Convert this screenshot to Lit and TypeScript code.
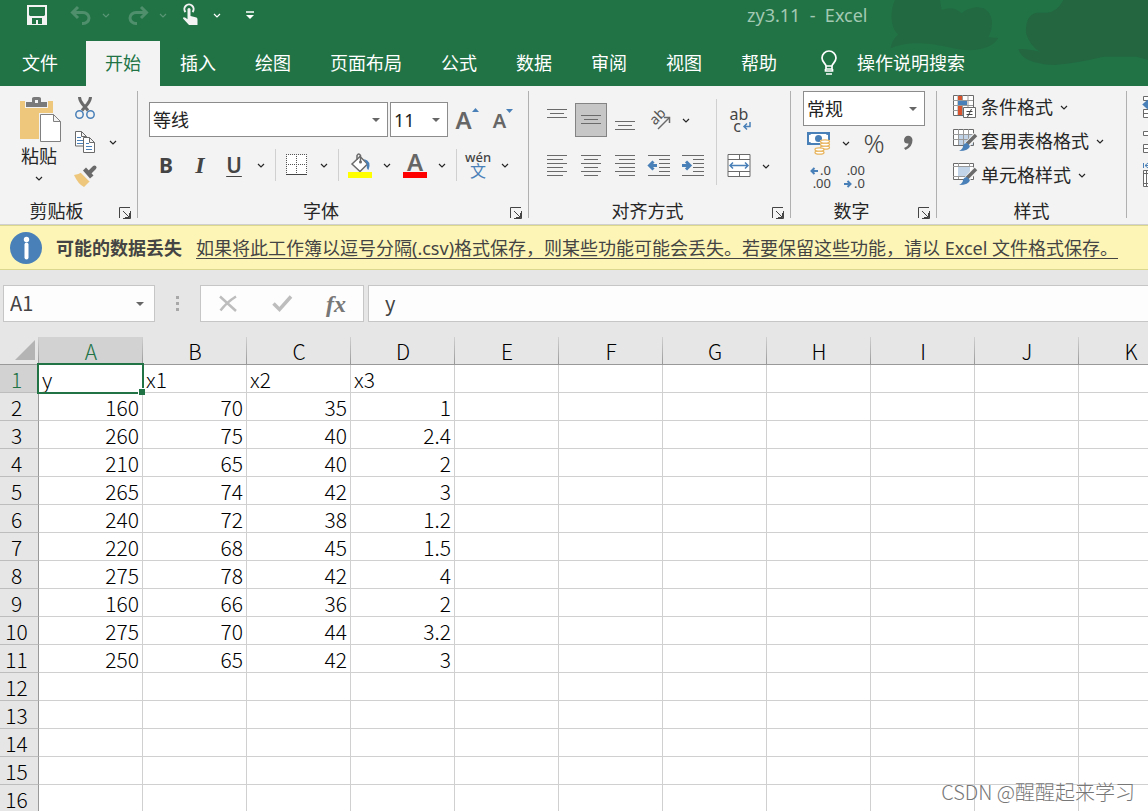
import { LitElement, html, svg, css } from "lit";
import { customElement } from "lit/decorators.js";
import { classMap } from "lit/directives/class-map.js";

const GREY = "#6a6a6a";
const BLUE = "#4a80b8";

const icon = (w: number, h: number, body: unknown) => html`
  <svg width=${w} height=${h} viewBox="0 0 ${w} ${h}" fill="none" aria-hidden="true">${body}</svg>`;

/** Horizontal rules: each entry is [x1, x2, y]. */
const rules = (list: number[][]) =>
  svg`<path stroke=${GREY} stroke-width="1" shape-rendering="crispEdges" d=${list.map(([a, b, y]) => `M${a} ${y}.5H${b}`).join("")} />`;

const ICONS = {
  caret: icon(8, 5, svg`<path d="M1 1l3 3 3-3" stroke="currentColor" stroke-width="1.2"/>`),
  arrow: icon(8, 4, svg`<path d="M0 0h8L4 4z" fill="#666"/>`),
  save: icon(20, 20, svg`<path d="M0 0h20v20H0z" fill="#f3f3f3"/><path d="M2 2h16v8l-1 1H3l-1-1zM5 13h10v6H5z" fill="#217346"/><path d="M8 15h3v4H8z" fill="#f3f3f3"/><path d="M7 15h2v4H7z" fill="#217346"/>`),
  undo: icon(22, 20, svg`<path d="M8 2L2.500 7.500 8 13M2.500 7.500H13a6 5.500 0 0 1 0 11h-1" stroke="#4f8f6c" stroke-width="3"/>`),
  redo: icon(22, 20, svg`<path d="M14 2l5.500 5.500L14 13M19.500 7.500H9a6 5.500 0 0 0 0 11h1" stroke="#4f8f6c" stroke-width="3"/>`),
  touch: icon(18, 22, svg`<path d="M4.500 8a4.600 4.600 0 1 1 7 0" stroke="#f3f3f3" stroke-width="2"/><path d="M6.500 5q1.500-2 3 0v7l6 1.500q1 .5 1 2V21H8L2 14.500q0-2 2.500-.8l2 1.500z" fill="#f3f3f3"/>`),
  more: icon(8, 8, svg`<path d="M0 1h8" stroke="#fff" stroke-width="1.500"/><path d="M0 4h8L4 8z" fill="#fff"/>`),
  bulb: icon(18, 26, svg`<path d="M6 19v-3c0-2-4-4-4-8a7 7 0 0 1 14 0c0 4-4 6-4 8v3zM5.500 19v2h7v-2M6 16h6" stroke="#fff" stroke-width="1.700"/><path d="M6 24h6" stroke="#fff" stroke-width="1.500"/>`),
  paste: icon(46, 46, svg`<g transform="translate(4 0)"><path d="M0 5h33v38H0z" fill="#eec67c"/><path d="M5 4h23v8H5z" fill="#f3f3f3"/><path d="M6 6h6V2.500Q12 1 14 1h5q2 0 2 1.500V6h6v5H6zM15 4v3h3V4z" fill="#7a7a7a" fill-rule="evenodd"/><path d="M19 17h16l7 7v22H19z" fill="#f3f3f3"/><path d="M20.500 18.500h13l7 7v20h-20zM33.500 18.500v7h7" fill="#fff" stroke="#808080"/></g>`),
  cut: icon(22, 24, svg`<path d="M5.500 1q0 3 3 7l5.500 6.500M16.500 1q0 3-3 7L8 14.500" stroke=${GREY} stroke-width="3"/><circle cx="5.500" cy="18.500" r="3.700" stroke=${BLUE} stroke-width="1.500"/><circle cx="16.500" cy="18.500" r="3.700" stroke=${BLUE} stroke-width="1.500"/>`),
  copy: icon(20, 22, svg`<path d="M.5.5h6l5 5v9.500H.5zM6.500.5v5h5" fill="#fff" stroke=${GREY}/><path d="M2 6.500h4M2 9.500h6M2 12.500h6" stroke=${BLUE}/><path d="M8.500 6.500h6l5 5v10h-11zM14.500 6.500v5h5" fill="#fff" stroke=${GREY}/><path d="M11 12.500h3M11 15.500h6M11 18.500h6" stroke=${BLUE}/>`),
  brush: icon(24, 22, svg`<path d="M1 10q4 0 8-3l8 9-6 6Q5 19 1 10z" fill="#eec67c"/><path d="M8 6l9.500 9.500" stroke="#f3f3f3" stroke-width="3"/><path d="M10 5.500l3-3 7.500 8-3.500 3z" fill=${GREY}/><path d="M16 8l5.500-5.500" stroke=${GREY} stroke-width="4" stroke-linecap="round"/>`),
  borders: icon(22, 22, svg`<path d="M1 1h20v20H1z" fill="#fff"/><path d="M0 .5h22M0 10.500h22M.5 0v20M10.500 0v20M20.500 0v20" stroke="#555" stroke-dasharray="1 1" shape-rendering="crispEdges"/><path d="M0 20.500h21" stroke="#444" shape-rendering="crispEdges"/>`),
  fill: icon(26, 26, svg`<path d="M5 12l8-7.500 7.500 7.500-7.500 7.500z" fill="#fff" stroke=${GREY} stroke-width="1.500"/><path d="M10 8V3.500q1.700-3 3.500 0V10" stroke=${GREY} stroke-width="1.500"/><circle cx="13.500" cy="10" r="1.500" fill=${GREY}/><path d="M17 7q8 2 4.500 11-2.500-1-1.500-6z" fill=${BLUE}/><path d="M1 20h24v6H1z" fill="#ff0"/>`),
  rotate: icon(22, 22, svg`<path d="M10 20L21 9" stroke=${GREY} stroke-width="1.500"/><path d="M16 8.500h5.500V14" stroke=${GREY} stroke-width="1.500"/><text transform="translate(10 8) rotate(-45)" y="4" text-anchor="middle" font-size="14" font-family="Noto Sans" fill="#555">ab</text>`),
  top: icon(22, 22, rules([[1, 21, 0], [4, 18, 4], [1, 21, 8]])),
  middle: icon(22, 22, rules([[1, 21, 6], [4, 18, 10], [1, 21, 14]])),
  bottom: icon(22, 22, rules([[1, 21, 12], [4, 18, 16], [1, 21, 20]])),
  left: icon(22, 22, rules([[1, 21, 0], [1, 17, 4], [1, 21, 8], [1, 17, 12], [1, 21, 16], [1, 17, 20]])),
  center: icon(22, 22, rules([[1, 21, 0], [4, 18, 4], [1, 21, 8], [4, 18, 12], [1, 21, 16], [4, 18, 20]])),
  right: icon(22, 22, rules([[1, 21, 0], [5, 21, 4], [1, 21, 8], [5, 21, 12], [1, 21, 16], [5, 21, 20]])),
  outdent: icon(22, 22, svg`${rules([[0, 22, 0], [11, 22, 4], [11, 22, 8], [11, 22, 12], [11, 22, 16], [0, 22, 20]])}<path d="M9 10.500H2M5.500 6.500l-4 4 4 4" stroke=${BLUE} stroke-width="3"/>`),
  indent: icon(22, 22, svg`${rules([[0, 22, 0], [11, 22, 4], [11, 22, 8], [11, 22, 12], [11, 22, 16], [0, 22, 20]])}<path d="M0 10.500h7M4 6.500l4 4-4 4" stroke=${BLUE} stroke-width="3"/>`),
  merge: icon(24, 24, svg`<path d="M1 .5h22v22H1z" fill="#fff" stroke=${GREY}/><path d="M1 5.500h22M1 17.500h22M12.500 0v5M12.500 18v5" stroke=${GREY}/><path d="M3 11.500h18M6 8.500l-3 3 3 3M18 8.500l3 3-3 3" stroke=${BLUE} stroke-width="1.500"/>`),
  wrapMark: icon(8, 8, svg`<path d="M7 0v4.500H1M4 1.500l-3 3 3 3" stroke=${BLUE} stroke-width="1.500"/>`),
  money: icon(24, 24, svg`<path d="M0 1h23v13H0z" fill=${BLUE}/><path d="M2 4q2 0 2-1h15q0 1 2 1v7q-2 0-2 1H4q0-1-2-1z" fill="#fff"/><circle cx="11.500" cy="7.500" r="3.500" fill=${BLUE}/><path d="M13 9h10v11h-5v4H7v-9h6z" fill="#f3f3f3"/><g fill="#fff" stroke="#e8b45c" stroke-width="1.300"><ellipse cx="18" cy="16.500" rx="4.500" ry="1.700"/><ellipse cx="18" cy="13.500" rx="4.500" ry="1.700"/><ellipse cx="18" cy="10.500" rx="4.500" ry="1.700"/><ellipse cx="12.500" cy="21.500" rx="4.500" ry="1.700"/><ellipse cx="12.500" cy="18.500" rx="4.500" ry="1.700"/></g>`),
  comma: icon(10, 16, svg`<path d="M1 5a4.200 4.200 0 1 1 8.500 0Q9.500 12 2.500 15L1 13q4.500-2 4.500-4.500Q1 9 1 5z" fill=${GREY}/>`),
  less: icon(8, 8, svg`<path d="M8 4H2M4.500 1l-3 3 3 3" stroke=${BLUE} stroke-width="2"/>`),
  greater: icon(8, 8, svg`<path d="M0 4h6M3.500 1l3 3-3 3" stroke=${BLUE} stroke-width="2"/>`),
  conditional: icon(24, 24, svg`<path d="M.5.5h20v20H.5z" fill="#fff" stroke=${GREY}/><path d="M0 5.500h20M0 10.500h20M0 15.500h20M5 0v20M9.500 0v20M15 0v20" stroke="#999"/><path d="M5 1h4v4H5zM5 11h4v9H5z" fill="#d9532c"/><path d="M5 6h9v4H5z" fill=${BLUE}/><path d="M10.500 12.500h12v10h-12z" fill="#fff" stroke=${GREY}/><path d="M13.500 16.500h6M13.500 19.500h6M18.500 14l-4 8" stroke="#444"/>`),
  tableStyle: icon(24, 24, svg`<path d="M.5.5h20v16H.5z" fill="#fff" stroke=${GREY}/><path d="M5 5h15v11H5z" fill="#c2d5e8"/><path d="M0 5.500h20M0 10.500h20M5.500 0v16M10.500 0v16M15.500 0v16" stroke="#999"/><path d="M14 16l9-10" stroke="#f3f3f3" stroke-width="6"/><path d="M14 15l9-9" stroke=${GREY} stroke-width="3.500"/><path d="M14 14l3 3q-1 5-11 5 4-2 4-5 1-3 4-3z" fill=${BLUE}/>`),
  cellStyle: icon(24, 24, svg`<path d="M.5.5h20v16H.5z" fill="#fff" stroke=${GREY}/><path d="M5.500 0v16M0 3.500h20M0 13.500h20M16.500 0v16" stroke="#999"/><path d="M5 4h12v9H5z" fill="#c2d5e8"/><path d="M14 16l9-10" stroke="#f3f3f3" stroke-width="6"/><path d="M14 15l9-9" stroke=${GREY} stroke-width="3.500"/><path d="M14 14l3 3q-1 5-11 5 4-2 4-5 1-3 4-3z" fill=${BLUE}/>`),
  insertCells: icon(22, 24, svg`<path d="M.5 1.500h20v4H.5zM.5 14.500h20v8H.5zM0 18.500h20" fill="#fff" stroke=${GREY}/><path d="M9 9.500H2M5.500 6l-4 3.500 4 3.500" stroke=${BLUE} stroke-width="3"/>`),
  deleteCells: icon(22, 24, svg`<path d="M.5 2.500h20v4H.5zM.5 15.500h20v8H.5zM0 19.500h20" fill="#fff" stroke=${GREY}/>`),
  formatCells: icon(22, 24, svg`<path d="M.5 0v5M20.500 0v5M2 2.500h16M5 0L2 2.500 5 5" stroke=${BLUE}/><path d="M.5 7.500h20v16H.5zM0 10.500h20M0 20.500h20M3.500 7v16" fill="#fff" stroke=${GREY}/>`),
  launcher: icon(12, 12, svg`<path d="M.5 11V.5H11M11.500 4v7.500H4M4 4l6.500 6.500M10.500 6v4.500H6" stroke="#444"/>`),
  info: icon(32, 32, svg`<circle cx="16" cy="16" r="16" fill=${BLUE}/><circle cx="16.500" cy="7.500" r="2.700" fill="#fff"/><path d="M16.500 12.500v13" stroke="#fff" stroke-width="4" stroke-linecap="round"/>`),
  dots: icon(4, 16, svg`<path d="M0 1h3v3H0zM0 7h3v3H0zM0 13h3v3H0z" fill="#a8a8a8"/>`),
  cancel: icon(18, 17, svg`<path d="M1 1.500l16 14.500M17 1.500Q8 7 1.500 15.500" stroke="#bdbdbd" stroke-width="2.500"/>`),
  accept: icon(20, 17, svg`<path d="M1.500 8.500l6 6L19 1.500" stroke="#bdbdbd" stroke-width="3.500"/>`),
  corner: icon(20, 20, svg`<path d="M20 0v20H0z" fill="#b4b4b4"/>`),
};

const TABS = ["文件", "开始", "插入", "绘图", "页面布局", "公式", "数据", "审阅", "视图", "帮助"];
const COLUMNS = "ABCDEFGHIJK".split("");
const ROW_COUNT = 16;
const DATA: (string | number)[][] = [
  ["y", "x1", "x2", "x3"],
  [160, 70, 35, 1],
  [260, 75, 40, 2.4],
  [210, 65, 40, 2],
  [265, 74, 42, 3],
  [240, 72, 38, 1.2],
  [220, 68, 45, 1.5],
  [275, 78, 42, 4],
  [160, 66, 36, 2],
  [275, 70, 44, 3.2],
  [250, 65, 42, 3],
];

@customElement("app-root")
class AppRoot extends LitElement {
  static styles = css`
    * { box-sizing: border-box; }
    svg { display: block; flex: none; overflow: visible; }
    button, input, select { font: inherit; color: inherit; margin: 0; padding: 0; border: 0; background: none; border-radius: 0; }
    button { display: flex; align-items: center; justify-content: center; }

    :host {
      display: flex; flex-direction: column; height: 100vh; overflow: hidden; position: relative;
      font: 18px/24px "Noto Sans", "Noto Sans CJK SC", sans-serif; color: #262626; background: #e6e6e6;
    }
    .head { position: relative; flex: none; background: #217346; color: #fff; overflow: hidden; }
    .smudge { position: absolute; top: 0; right: 0; }
    .top { position: relative; display: flex; align-items: center; height: 41px; padding: 0 24px 11px; }
    .tool { width: 26px; height: 30px; }
    .drop { width: 24px; height: 30px; color: #5a9675; }
    .drop.on { color: #fff; }
    .undo { margin-left: 18px; }
    .redo { margin-left: 7px; }
    .touch { margin-left: 2px; }
    .drop.on { width: 28px; }
    .custom { margin-left: 6px; }
    .title { flex: 1; padding-left: 44%; color: #a3c9b3; white-space: pre; }
    .tabs { position: relative; display: flex; gap: 1px; height: 45px; }
    .tab { padding: 0 19px 2px; white-space: nowrap; }
    .tab.file { padding: 0 22px 2px; margin-right: 5px; }
    .tab.active { background: #f3f3f3; color: #217346; }
    .tell { gap: 19px; padding: 0 0 2px 23px; white-space: nowrap; }

    .ribbon { flex: none; display: flex; height: 139px; background: #f3f3f3; border-bottom: 1px solid #d0d0d0; overflow: hidden; }
    .group { flex: none; display: flex; flex-direction: column; }
    .rule { flex: none; width: 1px; margin: 5px 0 6px; background: #b0b0b0; }
    .body { display: flex; height: 113px; padding-top: 5px; }
    .foot { display: flex; height: 26px; padding-top: 1px; }
    .name { flex: 1; text-align: center; }
    .launch { width: 24px; height: 28px; }
    .row { display: flex; align-items: center; height: 34px; }
    .btn { width: 34px; height: 34px; color: #444; flex: none; }
    .btn.on { width: 32px; margin: 0 1px; background: #c6c6c6; border: 1px solid #838383; }
    .caret { width: 20px; height: 34px; margin-right: 1px; color: #262626; flex: none; }
    .split { flex: none; width: 1px; height: 32px; margin: 0 4px 0 3px; background: #d0d0d0; }
    .split.tall { height: 86px; margin: 8px 5px 0 6px; }
    .clip { padding-left: 7px; width: 137px; }
    .paste { flex-direction: column; justify-content: flex-start; width: 64px; padding-top: 5px; gap: 2px; }
    .word { margin-bottom: 6px; }
    .side .btn { width: 28px; }
    .side .caret { margin-left: 4px; }
    .font { width: 390px; padding: 16px 0 0 11px; flex-direction: column; gap: 11px; }
    .font .pick { gap: 2px; height: 35px; }
    .align { width: 261px; padding-left: 11px; }
    .lines { display: flex; flex-direction: column; gap: 12px; padding-top: 12px; }
    .number { width: 145px; padding-left: 11px; flex-direction: column; }
    .styles { width: 189px; padding: 4px 0 0 16px; flex-direction: column; }
    .cells { padding: 4px 0 0 16px; flex-direction: column; }
    .wide { height: 34px; gap: 4px; justify-content: flex-start; white-space: nowrap; }
    .styles svg:last-child { margin-left: 3px; }
    .combo { display: grid; align-items: center; height: 35px; background: #fff; border: 1px solid #8c8c8c; }
    .combo > * { grid-area: 1 / 1; }
    .combo svg { justify-self: end; margin-right: 7px; pointer-events: none; }
    .combo select { appearance: none; height: 33px; padding-left: 3px; color: #222; }
    .family { width: 239px; }
    .size { width: 58px; }
    .format { width: 122px; margin-left: 1px; }
    .bold { font-weight: 700; font-size: 21px; }
    .italic { font: italic 700 24px/24px "Liberation Serif", serif; }
    .line { font-size: 21px; font-weight: 600; text-decoration: underline; text-decoration-thickness: 1px; text-underline-offset: 3px; }
    .grow { font-weight: 600; font-size: 24px; color: #666; align-items: flex-start; padding-top: 5px; }
    .shrink { font-weight: 600; font-size: 20px; color: #666; align-items: flex-start; padding-top: 6px; }
    .ink { flex-direction: column; color: #666; font-weight: 600; font-size: 24px; line-height: 20px; }
    .bar { width: 24px; height: 6px; background: #f00; }
    .pinyin { flex-direction: column; }
    .latin { font-size: 13px; line-height: 11px; font-weight: 500; }
    .han { font-size: 16px; line-height: 16px; color: #4a80b8; }
    .wrap { flex-direction: column; font-size: 16px; line-height: 12px; }
    .decimal { flex-direction: column; font-size: 13px; line-height: 13px; }
    .pair { display: flex; align-items: center; justify-content: flex-end; gap: 2px; width: 24px; }
    .percent { font-size: 26px; font-weight: 300; }

    .notice { flex: none; display: flex; align-items: center; height: 45px; padding: 0 10px; background: #fcf5b6; border: solid #dbd78e; border-width: 1px 0; color: #444; white-space: nowrap; overflow: hidden; }
    .strong { font-weight: 700; margin: 0 14px; }
    .strong + a { color: inherit; text-underline-offset: 3px; text-decoration-thickness: 1px; }

    .formula { flex: none; display: flex; height: 67px; padding: 15px 0; color: #444; font: 20px/24px "Noto Sans CJK SC", sans-serif; }
    .box { display: flex; align-items: center; height: 37px; background: #fdfdfd; border: 1px solid #c6c6c6; }
    .box input { flex: 1; min-width: 0; height: 35px; padding-bottom: 3px; }
    .namebox { width: 152px; margin-left: 3px; }
    .namebox input { padding-left: 6px; }
    .namebox button { width: 28px; height: 35px; }
    .grip { display: flex; align-items: center; justify-content: center; width: 45px; height: 35px; }
    .actions { width: 164px; margin-right: 4px; }
    .actions button { flex: 1; height: 35px; }
    .actions .fx { font: italic 700 24px/24px "Liberation Serif", serif; color: #777; }
    .entry { flex: 1; border-right: 0; }
    .entry input { padding-left: 16px; }

    .sheet { flex: 1; min-height: 0; overflow: hidden; }
    table { table-layout: fixed; border-collapse: separate; border-spacing: 0; width: 1183px; font: 300 21px/24px "Noto Sans CJK SC", sans-serif; color: #000; background: #fff; }
    .stub { width: 39px; }
    .col { width: 104px; }
    th, td { height: 28px; padding: 1px 3px 0; font-weight: inherit; border: solid #d0d0d0; border-width: 0 1px 1px 0; text-align: left; white-space: nowrap; }
    td.num { text-align: right; }
    thead th { background: linear-gradient(#d0d0d0, #999) right / 1px 100% no-repeat #e6e6e6; border-width: 0 0 1px; border-color: #999; text-align: center; }
    tbody th { background: #e6e6e6; border-right-color: #999; border-bottom-color: #bdbdbd; text-align: center; padding: 1px 5px 0 0; }
    thead th.hot, tbody th.hot { background-color: #d2d2d2; color: #217346; }
    thead .corner { padding: 0 3px 2px 15px; }
    td.cursor { position: relative; }
    .ring { position: absolute; inset: -2px; border: 2px solid #217346; pointer-events: none; }
    .knob { position: absolute; right: -3px; bottom: -3px; width: 7px; height: 7px; background: #217346; border: solid #fff; border-width: 1px 0 0 1px; pointer-events: none; }
    .mark { position: absolute; right: 13px; bottom: 6px; font: 300 20px/26px "Noto Sans CJK SC", sans-serif; color: #777; }
  `;

  private caret(label: string) {
    return html`<button class="caret" aria-label=${label}>${ICONS.caret}</button>`;
  }
  private btn(label: string, glyph: unknown, cls = "") {
    return html`<button class="btn ${cls}" aria-label=${label}>${glyph}</button>`;
  }
  private combo(cls: string, label: string, value: string) {
    return html`<div class="combo ${cls}"><select aria-label=${label}><option>${value}</option></select>${ICONS.arrow}</div>`;
  }
  private foot(name: string, launch = true) {
    return html`<div class="foot"><span class="name">${name}</span>
      ${launch ? html`<button class="launch" aria-label="${name}设置">${ICONS.launcher}</button>` : null}</div>`;
  }

  private head() {
    return html`<header class="head">
      <svg class="smudge" width="278" height="86" viewBox="0 0 834 258" fill="#236640" aria-hidden="true">
        <path opacity=".8" d="M75 0C60 30 60 85 85 103Q65 120 62 145C110 122 180 128 250 145C300 157 365 150 385 114L355 112C378 70 365 20 320 22Q290 25 275 40Q250 15 215 30L210 0Z" />
        <path d="M580 0Q560 38 530 38H500Q465 45 468 100Q480 140 510 155Q470 145 445 147Q455 190 550 195Q620 190 700 170H800L834 180V0Z" />
      </svg>
      <div class="top">
        <button class="tool" aria-label="保存">${ICONS.save}</button>
        <button class="tool undo" aria-label="撤消">${ICONS.undo}</button>
        <button class="drop" aria-label="撤消列表">${ICONS.caret}</button>
        <button class="tool redo" aria-label="恢复">${ICONS.redo}</button>
        <button class="drop" aria-label="恢复列表">${ICONS.caret}</button>
        <button class="tool touch" aria-label="触摸模式">${ICONS.touch}</button>
        <button class="drop on" aria-label="触摸模式选项">${ICONS.caret}</button>
        <button class="tool custom" aria-label="自定义">${ICONS.more}</button>
        <span class="title">zy3.11  -  Excel</span>
      </div>
      <nav class="tabs">
        ${TABS.map((t, i) => html`<button class=${classMap({ tab: true, file: i === 0, active: i === 1 })}>${t}</button>`)}
        <button class="tell">${ICONS.bulb}操作说明搜索</button>
      </nav>
    </header>`;
  }

  private ribbon() {
    return html`<div class="ribbon">
      <section class="group">
        <div class="body clip">
          <button class="paste">${ICONS.paste}<span class="word">粘贴</span>${ICONS.caret}</button>
          <div class="side">
            <div class="row">${this.btn("剪切", ICONS.cut)}</div>
            <div class="row">${this.btn("复制", ICONS.copy)}${this.caret("复制选项")}</div>
            <div class="row">${this.btn("格式刷", ICONS.brush)}</div>
          </div>
        </div>
        ${this.foot("剪贴板")}
      </section>
      <i class="rule"></i>
      <section class="group">
        <div class="body font">
          <div class="row pick">
            ${this.combo("family", "字体", "等线")}${this.combo("size", "字号", "11")}
            ${this.btn("增大字号", html`A${icon(7, 4, svg`<path d="M0 4h7L3.500 0z" fill=${BLUE}/>`)}`, "grow")}
            ${this.btn("减小字号", html`A${icon(7, 4, svg`<path d="M0 0h7L3.500 4z" fill=${BLUE}/>`)}`, "shrink")}
          </div>
          <div class="row">
            ${this.btn("加粗", "B", "bold")}${this.btn("倾斜", "I", "italic")}${this.btn("下划线", "U", "line")}${this.caret("下划线选项")}
            <i class="split"></i>
            ${this.btn("边框", ICONS.borders)}${this.caret("边框选项")}
            <i class="split"></i>
            ${this.btn("填充颜色", ICONS.fill)}${this.caret("填充选项")}
            ${this.btn("字体颜色", html`A<span class="bar"></span>`, "ink")}${this.caret("字体颜色选项")}
            <i class="split"></i>
            ${this.btn("拼音", html`<span class="latin">wén</span><span class="han">文</span>`, "pinyin")}${this.caret("拼音选项")}
          </div>
        </div>
        ${this.foot("字体")}
      </section>
      <i class="rule"></i>
      <section class="group">
        <div class="body align">
          <div class="lines">
            <div class="row">
              ${this.btn("顶端对齐", ICONS.top)}${this.btn("垂直居中", ICONS.middle, "on")}${this.btn("底端对齐", ICONS.bottom)}
              ${this.btn("方向", ICONS.rotate)}${this.caret("方向选项")}
            </div>
            <div class="row">
              ${this.btn("左对齐", ICONS.left)}${this.btn("居中", ICONS.center)}${this.btn("右对齐", ICONS.right)}
              ${this.btn("减少缩进量", ICONS.outdent)}${this.btn("增加缩进量", ICONS.indent)}
            </div>
          </div>
          <i class="split tall"></i>
          <div class="lines">
            <div class="row">${this.btn("自动换行", html`<span>ab</span><span class="pair">c${ICONS.wrapMark}</span>`, "wrap")}</div>
            <div class="row">${this.btn("合并后居中", ICONS.merge)}${this.caret("合并选项")}</div>
          </div>
        </div>
        ${this.foot("对齐方式")}
      </section>
      <i class="rule"></i>
      <section class="group">
        <div class="body number">
          ${this.combo("format", "数字格式", "常规")}
          <div class="row">${this.btn("会计数字格式", ICONS.money)}${this.caret("货币选项")}${this.btn("百分比样式", "%", "percent")}${this.btn("千位分隔样式", ICONS.comma)}</div>
          <div class="row">
            ${this.btn("增加小数位数", html`<span class="pair">${ICONS.less}.0</span><span class="pair">.00</span>`, "decimal")}
            ${this.btn("减少小数位数", html`<span class="pair">.00</span><span class="pair">${ICONS.greater}.0</span>`, "decimal")}
          </div>
        </div>
        ${this.foot("数字")}
      </section>
      <i class="rule"></i>
      <section class="group">
        <div class="body styles">
          <button class="wide">${ICONS.conditional}条件格式${ICONS.caret}</button>
          <button class="wide">${ICONS.tableStyle}套用表格格式${ICONS.caret}</button>
          <button class="wide">${ICONS.cellStyle}单元格样式${ICONS.caret}</button>
        </div>
        ${this.foot("样式", false)}
      </section>
      <i class="rule"></i>
      <section class="group">
        <div class="body cells">
          <button class="wide" aria-label="插入">${ICONS.insertCells}</button>
          <button class="wide" aria-label="删除">${ICONS.deleteCells}</button>
          <button class="wide" aria-label="格式">${ICONS.formatCells}</button>
        </div>
      </section>
    </div>`;
  }

  private sheet() {
    const rows = Array.from({ length: ROW_COUNT }, (_, r) => DATA[r] ?? []);
    return html`<div class="sheet"><table>
      <colgroup><col class="stub" />${COLUMNS.map(() => html`<col class="col" />`)}</colgroup>
      <thead><tr>
        <th class="corner">${ICONS.corner}</th>
        ${COLUMNS.map((c, i) => html`<th class=${i === 0 ? "hot" : ""} scope="col">${c}</th>`)}
      </tr></thead>
      <tbody>${rows.map((row, r) => html`<tr>
        <th class=${r === 0 ? "hot" : ""} scope="row">${r + 1}</th>
        ${COLUMNS.map((_, c) => {
          const cursor = r === 0 && c === 0;
          return html`<td class=${classMap({ num: typeof row[c] === "number", cursor })}>${row[c] ?? ""}${cursor ? html`<i class="ring"></i><i class="knob"></i>` : null}</td>`;
        })}
      </tr>`)}</tbody>
    </table></div>`;
  }

  render() {
    return html`
      ${this.head()}
      ${this.ribbon()}
      <div class="notice">${ICONS.info}<span class="strong">可能的数据丢失</span><a href="#">如果将此工作簿以逗号分隔(.csv)格式保存，则某些功能可能会丢失。若要保留这些功能，请以 Excel 文件格式保存。</a></div>
      <div class="formula">
        <div class="box namebox"><input aria-label="名称框" value="A1" /><button aria-label="名称列表">${ICONS.arrow}</button></div>
        <span class="grip">${ICONS.dots}</span>
        <div class="box actions">
          <button aria-label="取消">${ICONS.cancel}</button>
          <button aria-label="输入">${ICONS.accept}</button>
          <button class="fx" aria-label="插入函数">fx</button>
        </div>
        <div class="box entry"><input aria-label="编辑栏" value="y" /></div>
      </div>
      ${this.sheet()}
      <span class="mark">CSDN @醒醒起来学习</span>`;
  }
}
